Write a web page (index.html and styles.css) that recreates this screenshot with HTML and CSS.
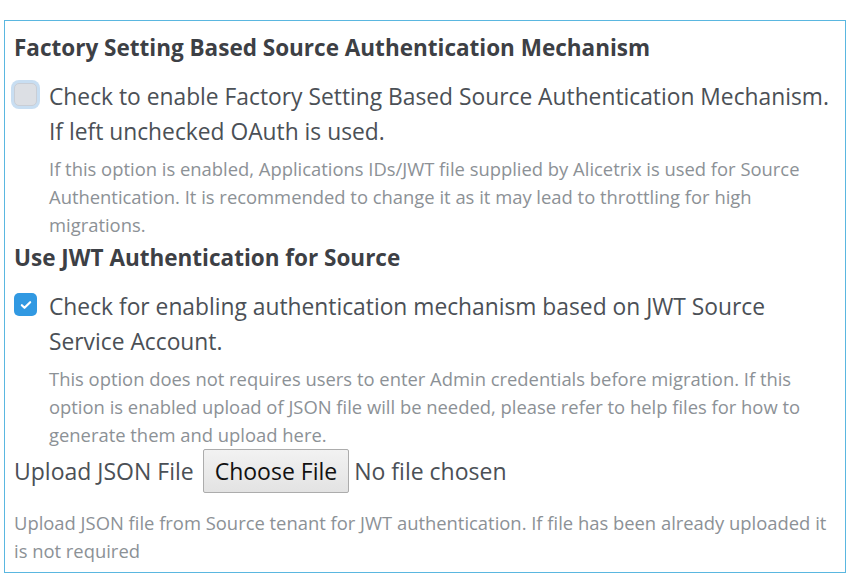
FILE: index.html
```html
<!DOCTYPE html>
<html lang="en">
<head>
<meta charset="utf-8">
<title>Source Authentication</title>
<link rel="stylesheet" href="styles.css">
</head>
<body>
<div class="panel">
  <h3 class="section-title">Factory Setting Based Source Authentication Mechanism</h3>
  <label class="check-row">
    <span class="box box-off"></span>
    <span class="check-text">Check to enable Factory Setting Based Source Authentication Mechanism. If left unchecked OAuth is used.</span>
  </label>
  <p class="help indented">If this option is enabled, Applications IDs/JWT file supplied by Alicetrix is used for Source Authentication. It is recommended to change it as it may lead to throttling for high migrations.</p>

  <h3 class="section-title second">Use JWT Authentication for Source</h3>
  <label class="check-row">
    <span class="box box-on"><svg viewBox="0 0 24 24" width="24" height="24"><path d="M7 12.2l3.2 3.2L17 8.6" fill="none" stroke="#fff" stroke-width="2.6" stroke-linecap="round" stroke-linejoin="round"/></svg></span>
    <span class="check-text">Check for enabling authentication mechanism based on JWT Source Service Account.</span>
  </label>
  <p class="help indented">This option does not requires users to enter Admin credentials before migration. If this option is enabled upload of JSON file will be needed, please refer to help files for how to generate them and upload here.</p>

  <div class="upload-row">
    <span class="upload-label">Upload JSON File</span>
    <span class="file-btn">Choose File</span>
    <span class="file-status">No file chosen</span>
  </div>
  <p class="help bottom">Upload JSON file from Source tenant for JWT authentication. If file has been already uploaded it is not required</p>
</div>
</body>
</html>
```
FILE: styles.css
```css
html, body {
  margin: 0;
  padding: 0;
  background: #ffffff;
}
body {
  padding: 20px 13px 0 4px;
  font-family: "Open Sans", "Noto Sans", sans-serif;
  color: #4b5056;
}
.panel {
  border: 1px solid #5ab7e0;
  height: 551px;
  padding: 0 7px 0 9px;
  box-sizing: content-box;
}
.section-title {
  margin: 12px 0 0;
  font-size: 22.5px;
  line-height: 30px;
  font-weight: 700;
  color: #3d4045;
}
.section-title.second {
  margin-top: 4px;
}
.check-row {
  display: flex;
  align-items: flex-start;
  gap: 12px;
  margin-top: 16px;
}
.box {
  flex: none;
  width: 23px;
  height: 23px;
  border-radius: 5px;
  margin-top: 4px;
  box-sizing: border-box;
  display: flex;
  align-items: center;
  justify-content: center;
}
.box-off {
  background: #dcdfe4;
  border: 1px solid #c9ced6;
  box-shadow: 0 0 0 3px #c8def2;
}
.box-on {
  background: #3199e2;
}
.box-on svg {
  width: 20px;
  height: 20px;
}
.check-text {
  font-size: 22.8px;
  line-height: 35px;
  color: #4b5056;
}
.help {
  margin: 6px 0 0;
  font-size: 18.4px;
  line-height: 28px;
  color: #8c9196;
}
.indented {
  padding-left: 35px;
}
.upload-row {
  display: flex;
  align-items: center;
  margin-top: 0;
  font-size: 23px;
}
.upload-label {
  margin-right: 9px;
}
.file-btn {
  display: inline-flex;
  align-items: center;
  height: 44px;
  box-sizing: border-box;
  padding: 0 11px;
  border: 1px solid #acacac;
  border-radius: 2px;
  background: linear-gradient(#f2f2f2, #e3e3e3);
  color: #111;
  margin-right: 5px;
}
.file-status {
  color: #4b5056;
}
.help.bottom {
  margin-top: 16px;
}
```
